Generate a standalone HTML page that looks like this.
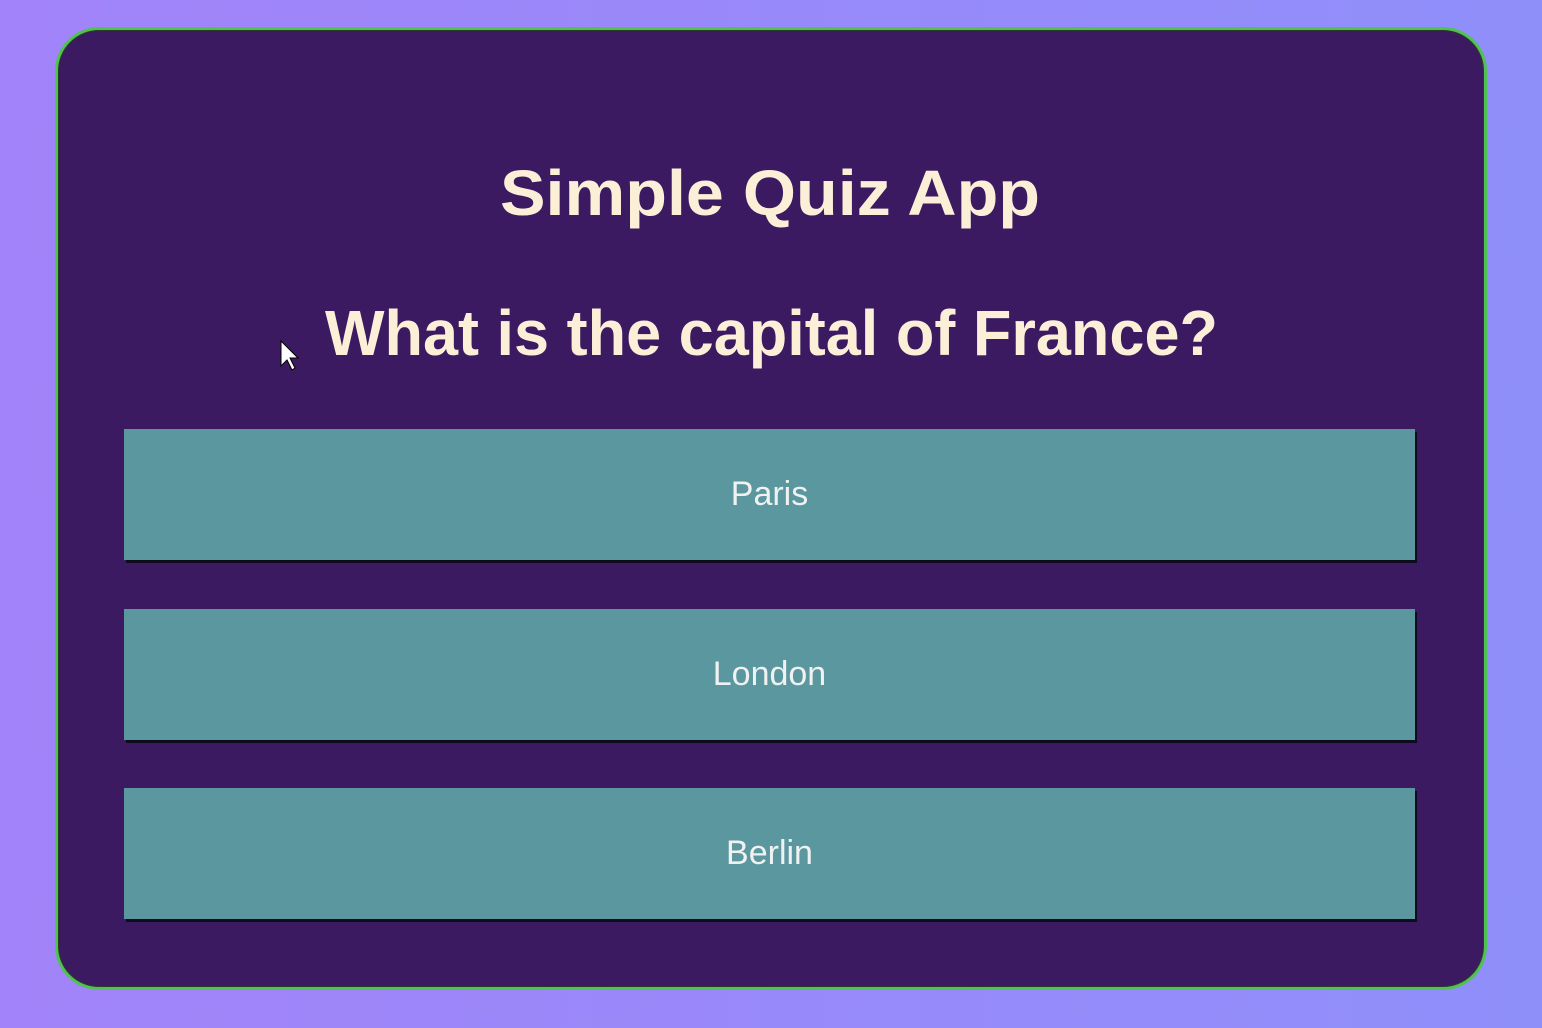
<!DOCTYPE html>
<html><head><meta charset="utf-8"><style>
html,body{margin:0;padding:0;width:1542px;height:1028px;overflow:hidden}
body{background:linear-gradient(90deg,#a283f9,#8f8ffa);position:relative;font-family:"Liberation Sans",Arial,sans-serif}
.card{position:absolute;left:55px;top:27px;width:1426px;height:957px;background:#3c1a62;border:3px solid #4fc24f;border-radius:44px;box-shadow:inset 0 0 0 1px #2a3a2a}
.btn{position:absolute;left:124px;width:1291px;height:131px;background:#5b979f;box-shadow:2px 3px 0 #0c0c1e;color:#f0f2f2;font-size:34px;text-align:center;line-height:131px}
svg{position:absolute;left:0;top:0}
</style></head><body>
<div class="card"></div>
<svg width="1542" height="400">
<text x="500" y="215" textLength="540" lengthAdjust="spacingAndGlyphs" font-family="Liberation Sans, sans-serif" font-weight="bold" font-size="64" fill="#fcefd8">Simple Quiz App</text>
<text x="325" y="355" textLength="893" lengthAdjust="spacingAndGlyphs" font-family="Liberation Sans, sans-serif" font-weight="bold" font-size="64" fill="#fcefd8">What is the capital of France?</text>
<path d="M281 341 L281 366 L287 360 L292 370 L295 368 L290 358 L298 358 Z" fill="#fff" stroke="#000" stroke-width="1"/>
</svg>
<div class="btn" style="top:429px">Paris</div>
<div class="btn" style="top:609px">London</div>
<div class="btn" style="top:788px">Berlin</div>
</body></html>
